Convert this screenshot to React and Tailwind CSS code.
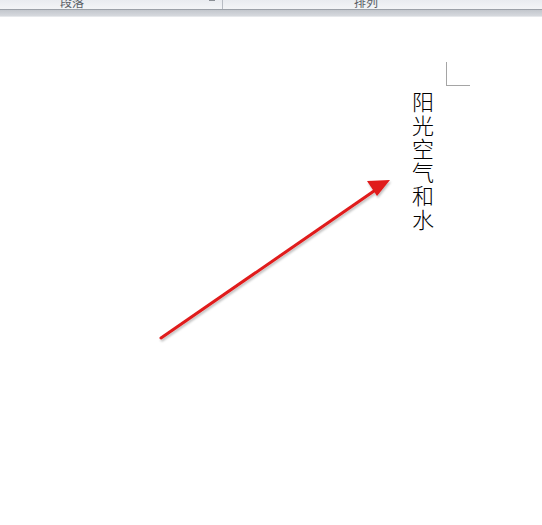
import React from 'react';

const font = { fontFamily: '"Noto Sans CJK SC", "Liberation Sans", sans-serif' };

const Ribbon = () => (
  <div className="w-full">
    <div className="flex h-[9px] overflow-hidden bg-gradient-to-b from-[#e9ecf0] to-[#f3f5f7] text-[12px] leading-[12px] text-[#5a5f66]" style={font}>
      <div className="flex w-[222px] shrink-0 items-start pl-[60px] pr-[7px]">
        <span className="-mt-[4px]">段落</span>
        <span className="ml-auto h-[3px] w-[6px] border-t border-[#8b9096]"></span>
      </div>
      <div className="w-px bg-[#b7bcc3]"></div>
      <div className="flex flex-1 items-start pl-[131px]">
        <span className="-mt-[4px]">排列</span>
      </div>
    </div>
    <div className="h-px bg-[#9ba1a8]"></div>
    <div className="h-[6px] bg-gradient-to-b from-[#c3c7cd] to-[#d6d9de]"></div>
    <div className="h-px bg-[#e6e8eb]"></div>
  </div>
);

const Arrow = () => (
  <svg className="absolute left-0 top-0" width="542" height="508" viewBox="0 0 542 508">
    <defs>
      <filter id="sh" x="-10%" y="-10%" width="120%" height="120%">
        <feDropShadow dx="1" dy="2" stdDeviation="1.2" floodColor="#000" floodOpacity="0.25" />
      </filter>
    </defs>
    <g filter="url(#sh)">
      <line x1="161" y1="321" x2="374" y2="174" stroke="#e01a1a" strokeWidth="3" strokeLinecap="round" />
      <polygon points="390,163 367,164 377,179" fill="#e01a1a" />
    </g>
  </svg>
);

export default function App() {
  return (
    <div className="w-[542px] h-[525px] bg-white overflow-hidden">
      <Ribbon />
      <div className="relative h-[508px]">
        <Arrow />
        <div className="relative flex flex-col items-start pl-[412px] pt-[45px]">
          <div className="ml-[34px] h-[24px] w-[24px] border-l border-b border-[#a5a5a5]"></div>
          <div className="mt-[3px] flex flex-col items-center text-[22px] leading-[23.6px] text-[#000] font-light" style={font}>
            {'阳光空气和水'.split('').map((c) => (
              <span key={c}>{c}</span>
            ))}
          </div>
        </div>
      </div>
    </div>
  );
}
